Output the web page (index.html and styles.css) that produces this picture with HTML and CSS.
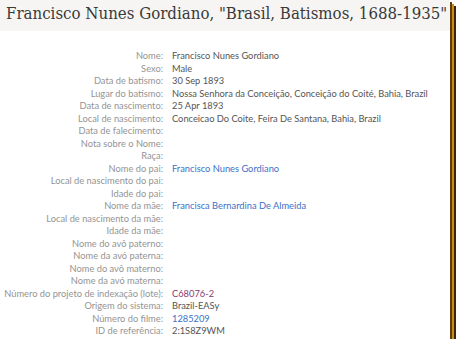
FILE: index.html
```html
<!DOCTYPE html>
<html>
<head>
<meta charset="utf-8">
<link rel="stylesheet" href="styles.css">
</head>
<body>
<div class="page">
  <div class="header"><h1 class="title">Francisco Nunes Gordiano, "Brasil, Batismos, 1688-1935"</h1></div>
  <div class="table">
    <div class="lbl">Nome:</div><div class="val">Francisco Nunes Gordiano</div>
    <div class="lbl">Sexo:</div><div class="val">Male</div>
    <div class="lbl">Data de batismo:</div><div class="val">30 Sep 1893</div>
    <div class="lbl">Lugar do batismo:</div><div class="val">Nossa Senhora da Conceição, Conceição do Coité, Bahia, Brazil</div>
    <div class="lbl">Data de nascimento:</div><div class="val">25 Apr 1893</div>
    <div class="lbl">Local de nascimento:</div><div class="val">Conceicao Do Coite, Feira De Santana, Bahia, Brazil</div>
    <div class="lbl">Data de falecimento:</div><div class="val"></div>
    <div class="lbl">Nota sobre o Nome:</div><div class="val"></div>
    <div class="lbl">Raça:</div><div class="val"></div>
    <div class="lbl">Nome do pai:</div><div class="val link">Francisco Nunes Gordiano</div>
    <div class="lbl">Local de nascimento do pai:</div><div class="val"></div>
    <div class="lbl">Idade do pai:</div><div class="val"></div>
    <div class="lbl">Nome da mãe:</div><div class="val link">Francisca Bernardina De Almeida</div>
    <div class="lbl">Local de nascimento da mãe:</div><div class="val"></div>
    <div class="lbl">Idade da mãe:</div><div class="val"></div>
    <div class="lbl">Nome do avô paterno:</div><div class="val"></div>
    <div class="lbl">Nome da avó paterna:</div><div class="val"></div>
    <div class="lbl">Nome do avô materno:</div><div class="val"></div>
    <div class="lbl">Nome da avó materna:</div><div class="val"></div>
    <div class="lbl">Número do projeto de indexação (lote):</div><div class="val batch">C68076-2</div>
    <div class="lbl">Origem do sistema:</div><div class="val">Brazil-EASy</div>
    <div class="lbl">Número do filme:</div><div class="val link">1285209</div>
    <div class="lbl">ID de referência:</div><div class="val">2:1S8Z9WM</div>
  </div>
</div>
</body>
</html>
```
FILE: styles.css
```css
html, body {
  margin: 0;
  padding: 0;
  background: #ffffff;
}
.page {
  width: 450px;
  height: 339px;
  background: #ffffff;
  box-shadow: 2px 2px 0 #5c3b0c, 4px 4px 0 #c98a1c, 6px 6px 0 #3d2606;
  overflow: hidden;
}
.header {
  background: #f6f5f3;
  height: 31px;
  padding: 0 0 0 6px;
}
.title {
  margin: 0;
  font-family: "DejaVu Serif", serif;
  font-stretch: condensed;
  font-weight: normal;
  font-size: 16.7px;
  line-height: 26px;
  color: #3a3a3a;
  white-space: nowrap;
}
.table {
  display: grid;
  grid-template-columns: 163px 1fr;
  column-gap: 9px;
  padding-top: 19px;
  font-family: "Lato", sans-serif;
  font-size: 9.3px;
  line-height: 12.5px;
}
.lbl {
  text-align: right;
  color: #949494;
  white-space: nowrap;
}
.val {
  color: #555555;
  white-space: nowrap;
}
.link {
  color: #3b70c8;
}
.batch {
  color: #8b3a72;
}
```
